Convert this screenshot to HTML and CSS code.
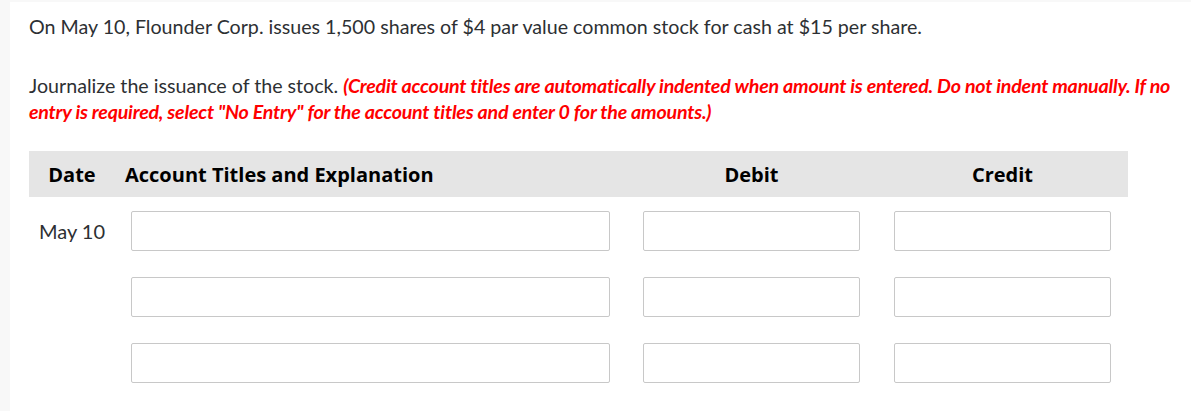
FILE: index.html
```html
<!DOCTYPE html>
<html>
<head>
<meta charset="utf-8">
<link rel="stylesheet" href="styles.css">
</head>
<body>
<div class="card">
  <p class="q">On May 10, Flounder Corp. issues 1,500 shares of $4 par value common stock for cash at $15 per share.</p>
  <p class="instr">Journalize the issuance of the stock. <span class="red">(Credit account titles are automatically indented when amount is entered. Do not indent manually. If no entry is required, select "No Entry" for the account titles and enter 0 for the amounts.)</span></p>
  <div class="jtable">
    <div class="jhead">
      <div class="h-date">Date</div>
      <div class="h-acct">Account Titles and Explanation</div>
      <div class="h-amt">Debit</div>
      <div class="h-amt">Credit</div>
    </div>
    <div class="jrow">
      <div class="c-date">May 10</div>
      <div class="c-acct"><input class="box" type="text"></div>
      <div class="c-amt"><input class="box" type="text"></div>
      <div class="c-amt"><input class="box" type="text"></div>
    </div>
    <div class="jrow">
      <div class="c-date"></div>
      <div class="c-acct"><input class="box" type="text"></div>
      <div class="c-amt"><input class="box" type="text"></div>
      <div class="c-amt"><input class="box" type="text"></div>
    </div>
    <div class="jrow">
      <div class="c-date"></div>
      <div class="c-acct"><input class="box" type="text"></div>
      <div class="c-amt"><input class="box" type="text"></div>
      <div class="c-amt"><input class="box" type="text"></div>
    </div>
  </div>
</div>
</body>
</html>
```

FILE: styles.css
```css
html, body {
  margin: 0;
  padding: 0;
  background: #f8f8f8;
}
body {
  font-family: Lato, "Open Sans", sans-serif;
  color: #2d3033;
}
.card {
  margin: 2px 0 0 10px;
  background: #fff;
  padding: 12px 4px 20px 19px;
}
.q {
  margin: 0;
  font-size: 19.65px;
  line-height: 26px;
}
.instr {
  margin: 33px 0 0 0;
  font-size: 19.65px;
  line-height: 26px;
}
.red {
  color: #ff0000;
  font-weight: 700;
  font-style: italic;
  letter-spacing: -0.22px;
}
.jtable {
  margin-top: 26px;
  width: 1099px;
}
.jhead {
  display: grid;
  grid-template-columns: 86px 511px 251px 251px;
  height: 46px;
  align-items: center;
  background: #e5e5e5;
  font-family: "Open Sans", sans-serif;
  font-weight: 700;
  font-size: 20px;
  color: #000;
}
.h-date { text-align: center; }
.h-acct { padding-left: 10px; }
.h-amt { text-align: center; }
.jrow {
  display: grid;
  grid-template-columns: 86px 511px 251px 251px;
  padding: 14px 0 12px 0;
  align-items: center;
}
.c-date {
  text-align: center;
  font-size: 20px;
}
.c-acct { padding: 0 16px; }
.c-amt { padding: 0 17px; }
.box {
  display: block;
  box-sizing: border-box;
  width: 100%;
  height: 40px;
  margin: 0;
  border: 1px solid #c8c8c8;
  border-radius: 2px;
  background: #fff;
  outline: none;
}
```
